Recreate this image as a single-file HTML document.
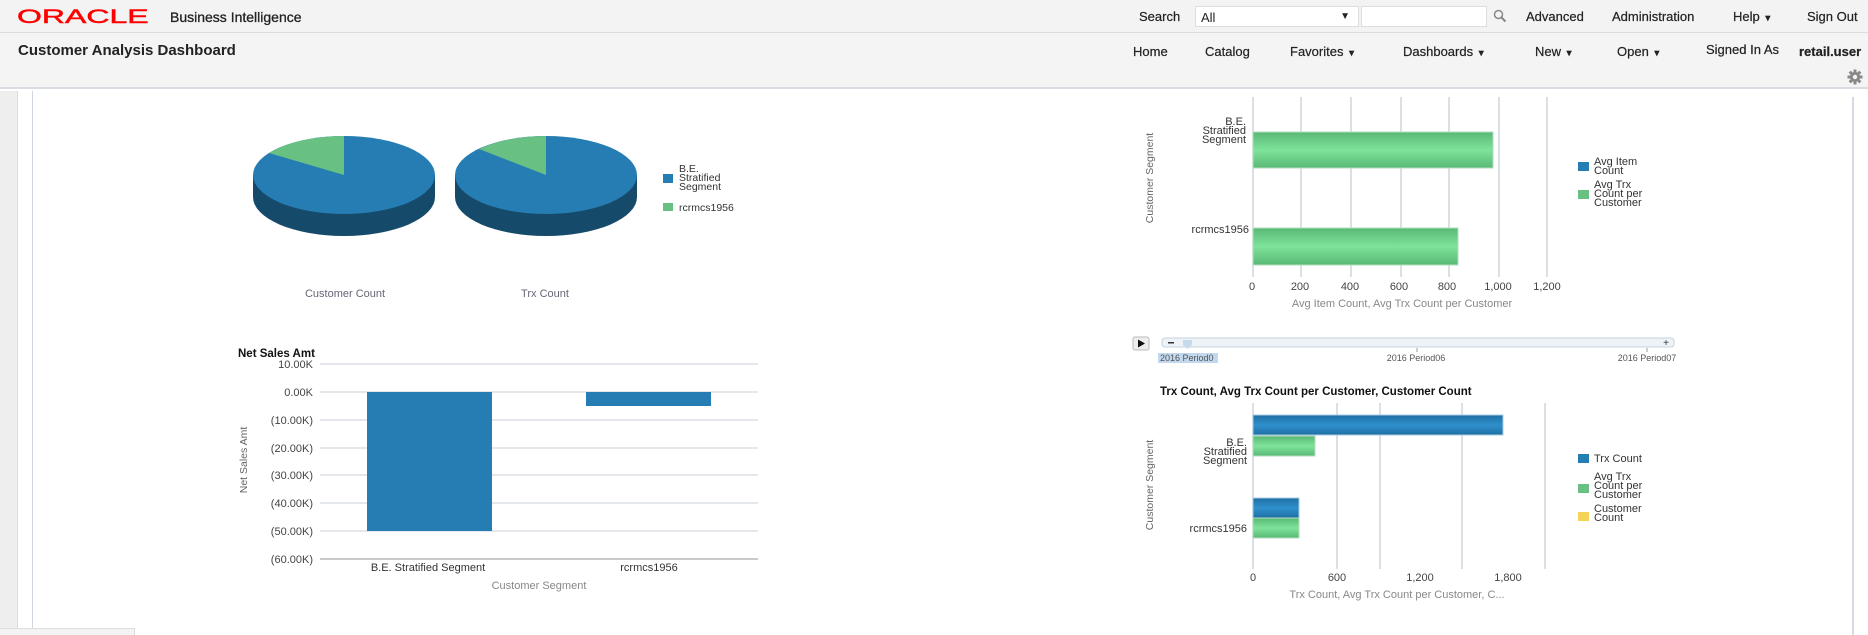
<!DOCTYPE html>
<html><head><meta charset="utf-8"><style>
*{margin:0;padding:0;box-sizing:border-box}
body{width:1868px;height:635px;overflow:hidden;background:#fff;font-family:"Liberation Sans",Arial,sans-serif;position:relative;color:#222}
.a{position:absolute;white-space:nowrap}
#top{position:absolute;left:0;top:0;width:1868px;height:33px;background:#f3f3f3;border-bottom:1px solid #dcdcdc}
#bar2{position:absolute;left:0;top:33px;width:1868px;height:56px;background:#f4f4f4;border-bottom:2px solid #d8dde3}
.n{font-size:13px;color:#222;-webkit-text-stroke:0.2px #222}
.tri{font-size:9px}
</style></head><body>
<div id="top"></div><div id="bar2"></div>
<div class="a" style="left:17px;top:6px;font-size:25px;color:#f00;transform:scaleX(1.28) scaleY(0.78);transform-origin:0 0;-webkit-text-stroke:0.6px #f00">ORACLE</div>
<div class="a" style="left:170px;top:9px;font-size:14px;color:#222;-webkit-text-stroke:0.3px #222">Business Intelligence</div>
<div class="a n" style="left:1139px;top:9px">Search</div>
<div class="a" style="left:1195px;top:6px;width:164px;height:21px;background:#fff;border:1px solid #ddd;font-size:13px;padding:3px 5px">All<span style="position:absolute;right:8px;top:4px;font-size:10px">▼</span></div>
<div class="a" style="left:1361px;top:6px;width:126px;height:21px;background:#fff;border:1px solid #ddd"></div>
<svg class="a" style="left:1493px;top:9px" width="14" height="14"><circle cx="5.5" cy="5.5" r="4" fill="none" stroke="#888" stroke-width="1.5"/><path d="M8.5 8.5L12.5 12.5" stroke="#888" stroke-width="2"/></svg>
<div class="a n" style="left:1526px;top:9px">Advanced</div>
<div class="a n" style="left:1612px;top:9px">Administration</div>
<div class="a n" style="left:1733px;top:9px">Help <span class="tri">▼</span></div>
<div class="a n" style="left:1807px;top:9px">Sign Out</div>
<div class="a" style="left:18px;top:42px;font-size:15px;font-weight:bold;color:#222">Customer Analysis Dashboard</div>
<div class="a n" style="left:1133px;top:44px">Home</div>
<div class="a n" style="left:1205px;top:44px">Catalog</div>
<div class="a n" style="left:1290px;top:44px">Favorites <span class="tri">▼</span></div>
<div class="a n" style="left:1403px;top:44px">Dashboards <span class="tri">▼</span></div>
<div class="a n" style="left:1535px;top:44px">New <span class="tri">▼</span></div>
<div class="a n" style="left:1617px;top:44px">Open <span class="tri">▼</span></div>
<div class="a n" style="left:1706px;top:42px">Signed In As</div>
<div class="a n" style="left:1799px;top:44px;font-weight:bold">retail.user</div>
<svg class="a" style="left:1847px;top:69px" width="16" height="16" viewBox="0 0 16 16"><g fill="#888"><circle cx="8" cy="8" r="5"/><rect x="6.5" y="0.5" width="3" height="15"/><rect x="0.5" y="6.5" width="15" height="3"/><rect x="6.5" y="0.5" width="3" height="15" transform="rotate(45 8 8)"/><rect x="6.5" y="0.5" width="3" height="15" transform="rotate(-45 8 8)"/></g><circle cx="8" cy="8" r="2.2" fill="#f4f4f4"/></svg>
<div class="a" style="left:0;top:91px;width:18px;height:537px;background:#eeeeee;border-right:1px solid #d8dde3"></div>
<div class="a" style="left:32px;top:91px;width:1px;height:537px;background:#d0d6e0"></div>
<div class="a" style="left:1852px;top:97px;width:2px;height:538px;background:#d5dae2"></div>
<div class="a" style="left:0;top:628px;width:135px;height:7px;background:#f3f3f3;border-top:1px solid #ddd;border-right:1px solid #ddd"></div>

<svg class="a" style="left:0;top:0" width="1868" height="635" font-family="Liberation Sans, Arial, sans-serif">
<g>
<path d="M253 175 L253 197 A91 39 0 0 0 435 197 L435 175 Z" fill="#164a6b"/>
<ellipse cx="344" cy="175" rx="91" ry="39" fill="#267db3"/>
<path d="M344 175 L344 136 A91 39 0 0 0 269 153 Z" fill="#68c182"/>
<path d="M455 175 L455 197 A91 39 0 0 0 637 197 L637 175 Z" fill="#164a6b"/>
<ellipse cx="546" cy="175" rx="91" ry="39" fill="#267db3"/>
<path d="M546 175 L546 136 A91 39 0 0 0 479 149 Z" fill="#68c182"/>
<rect x="663" y="174" width="10" height="9" fill="#267db3"/>
<text font-size="10.5" fill="#333"><tspan x="679" y="172">B.E.</tspan><tspan x="679" y="181">Stratified</tspan><tspan x="679" y="190">Segment</tspan></text>
<rect x="663" y="203" width="10" height="8" fill="#68c182"/>
<text x="679" y="211" font-size="10.5" fill="#333">rcrmcs1956</text>
<text x="345" y="297" font-size="11" fill="#667" text-anchor="middle">Customer Count</text>
<text x="545" y="297" font-size="11" fill="#667" text-anchor="middle">Trx Count</text>
</g>
<g font-size="11">
<text x="238" y="357" font-size="11.5" font-weight="bold" fill="#111">Net Sales Amt</text>
<g stroke="#d3d9e1" stroke-width="1.2">
<line x1="320" y1="364" x2="758" y2="364"/><line x1="320" y1="392" x2="758" y2="392"/><line x1="320" y1="420" x2="758" y2="420"/><line x1="320" y1="448" x2="758" y2="448"/><line x1="320" y1="475" x2="758" y2="475"/><line x1="320" y1="503" x2="758" y2="503"/><line x1="320" y1="531" x2="758" y2="531"/></g>
<line x1="320" y1="559" x2="758" y2="559" stroke="#aaa" stroke-width="1.2"/>
<g fill="#444" text-anchor="end">
<text x="313" y="368">10.00K</text><text x="313" y="396">0.00K</text><text x="313" y="424">(10.00K)</text><text x="313" y="452">(20.00K)</text><text x="313" y="479">(30.00K)</text><text x="313" y="507">(40.00K)</text><text x="313" y="535">(50.00K)</text><text x="313" y="563">(60.00K)</text></g>
<rect x="367" y="392" width="125" height="139" fill="#267db3"/>
<rect x="586" y="392" width="125" height="14" fill="#267db3"/>
<text x="428" y="571" fill="#333" text-anchor="middle">B.E. Stratified Segment</text>
<text x="649" y="571" fill="#333" text-anchor="middle">rcrmcs1956</text>
<text x="539" y="589" fill="#888" text-anchor="middle">Customer Segment</text>
<text transform="translate(247 460) rotate(-90)" font-size="10.5" fill="#666" text-anchor="middle">Net Sales Amt</text>
</g>
<g font-size="11">
<g stroke="#cfd5de" stroke-width="1.5">
<line x1="1253" y1="97" x2="1253" y2="277"/><line x1="1301" y1="97" x2="1301" y2="277"/><line x1="1351" y1="97" x2="1351" y2="277"/><line x1="1401" y1="97" x2="1401" y2="277"/><line x1="1449" y1="97" x2="1449" y2="277"/><line x1="1499" y1="97" x2="1499" y2="277"/><line x1="1547" y1="97" x2="1547" y2="277"/></g>
<defs>
<linearGradient id="g" x1="0" y1="0" x2="0" y2="1"><stop offset="0" stop-color="#58b874"/><stop offset="0.5" stop-color="#7fe39b"/><stop offset="1" stop-color="#58b874"/></linearGradient>
<linearGradient id="b" x1="0" y1="0" x2="0" y2="1"><stop offset="0" stop-color="#1e6fa3"/><stop offset="0.5" stop-color="#2f90cc"/><stop offset="1" stop-color="#1e6fa3"/></linearGradient>
</defs>
<rect x="1253" y="132" width="240" height="36" fill="url(#g)" stroke="#b5dec0"/>
<rect x="1253" y="228" width="205" height="37" fill="url(#g)" stroke="#b5dec0"/>
<g fill="#333" text-anchor="end"><text x="1246" y="125">B.E.</text><text x="1246" y="134">Stratified</text><text x="1246" y="143">Segment</text><text x="1249" y="233">rcrmcs1956</text></g>
<g fill="#444" text-anchor="middle"><text x="1252" y="290">0</text><text x="1300" y="290">200</text><text x="1350" y="290">400</text><text x="1399" y="290">600</text><text x="1447" y="290">800</text><text x="1498" y="290">1,000</text><text x="1547" y="290">1,200</text></g>
<text x="1402" y="307" fill="#888" text-anchor="middle">Avg Item Count, Avg Trx Count per Customer</text>
<text transform="translate(1153 178) rotate(-90)" font-size="10.5" fill="#666" text-anchor="middle">Customer Segment</text>
<rect x="1578" y="162" width="11" height="9" fill="#267db3"/>
<rect x="1578" y="190" width="11" height="9" fill="#68c182"/>
<g fill="#333"><text x="1594" y="165">Avg Item</text><text x="1594" y="174">Count</text><text x="1594" y="188">Avg Trx</text><text x="1594" y="197">Count per</text><text x="1594" y="206">Customer</text></g>
</g>
<g>
<rect x="1133" y="337" width="16" height="13" fill="#eee" stroke="#bbb" rx="2"/>
<path d="M1138 339.5 L1145 343.5 L1138 347.5 Z" fill="#111"/>
<rect x="1162" y="338" width="512" height="9" rx="3" fill="#eef3f8" stroke="#c7d2de"/>
<path d="M1183 340 L1192 340 L1192 345 L1187.5 349 L1183 345 Z" fill="#c6daee"/>
<rect x="1168" y="342" width="6" height="1.5" fill="#333"/>
<text x="1666" y="346" font-size="10" fill="#333" text-anchor="middle">+</text>
<rect x="1158" y="353" width="60" height="10" fill="#c1d8ee"/>
<g font-size="9" fill="#555"><text x="1160" y="361">2016 Period0</text><text x="1416" y="361" text-anchor="middle">2016 Period06</text><text x="1647" y="361" text-anchor="middle">2016 Period07</text></g>
<line x1="1417" y1="348" x2="1417" y2="352" stroke="#999"/><line x1="1647" y1="348" x2="1647" y2="352" stroke="#999"/>
</g>
<g font-size="11">
<text x="1160" y="395" font-size="11.5" font-weight="bold" fill="#111">Trx Count, Avg Trx Count per Customer, Customer Count</text>
<g stroke="#cfd5de" stroke-width="1.5">
<line x1="1253" y1="403" x2="1253" y2="569"/><line x1="1337" y1="403" x2="1337" y2="569"/><line x1="1380" y1="403" x2="1380" y2="569"/><line x1="1462" y1="403" x2="1462" y2="569"/><line x1="1545" y1="403" x2="1545" y2="569"/></g>
<rect x="1253" y="415" width="250" height="20" fill="url(#b)" stroke="#a9cbe4"/>
<rect x="1253" y="436" width="62" height="20" fill="url(#g)" stroke="#b5dec0"/>
<rect x="1253" y="498" width="46" height="20" fill="url(#b)" stroke="#a9cbe4"/>
<rect x="1253" y="518" width="46" height="20" fill="url(#g)" stroke="#b5dec0"/>
<g fill="#333" text-anchor="end"><text x="1247" y="446">B.E.</text><text x="1247" y="455">Stratified</text><text x="1247" y="464">Segment</text><text x="1247" y="532">rcrmcs1956</text></g>
<g fill="#444" text-anchor="middle"><text x="1253" y="581">0</text><text x="1337" y="581">600</text><text x="1420" y="581">1,200</text><text x="1508" y="581">1,800</text></g>
<text x="1397" y="598" fill="#888" text-anchor="middle">Trx Count, Avg Trx Count per Customer, C...</text>
<text transform="translate(1153 485) rotate(-90)" font-size="10.5" fill="#666" text-anchor="middle">Customer Segment</text>
<rect x="1578" y="454" width="11" height="9" fill="#267db3"/>
<rect x="1578" y="484" width="11" height="9" fill="#68c182"/>
<rect x="1578" y="512" width="11" height="9" fill="#f7d259"/>
<g fill="#333"><text x="1594" y="462">Trx Count</text><text x="1594" y="480">Avg Trx</text><text x="1594" y="489">Count per</text><text x="1594" y="498">Customer</text><text x="1594" y="512">Customer</text><text x="1594" y="521">Count</text></g>
</g>
</svg>
</body></html>
